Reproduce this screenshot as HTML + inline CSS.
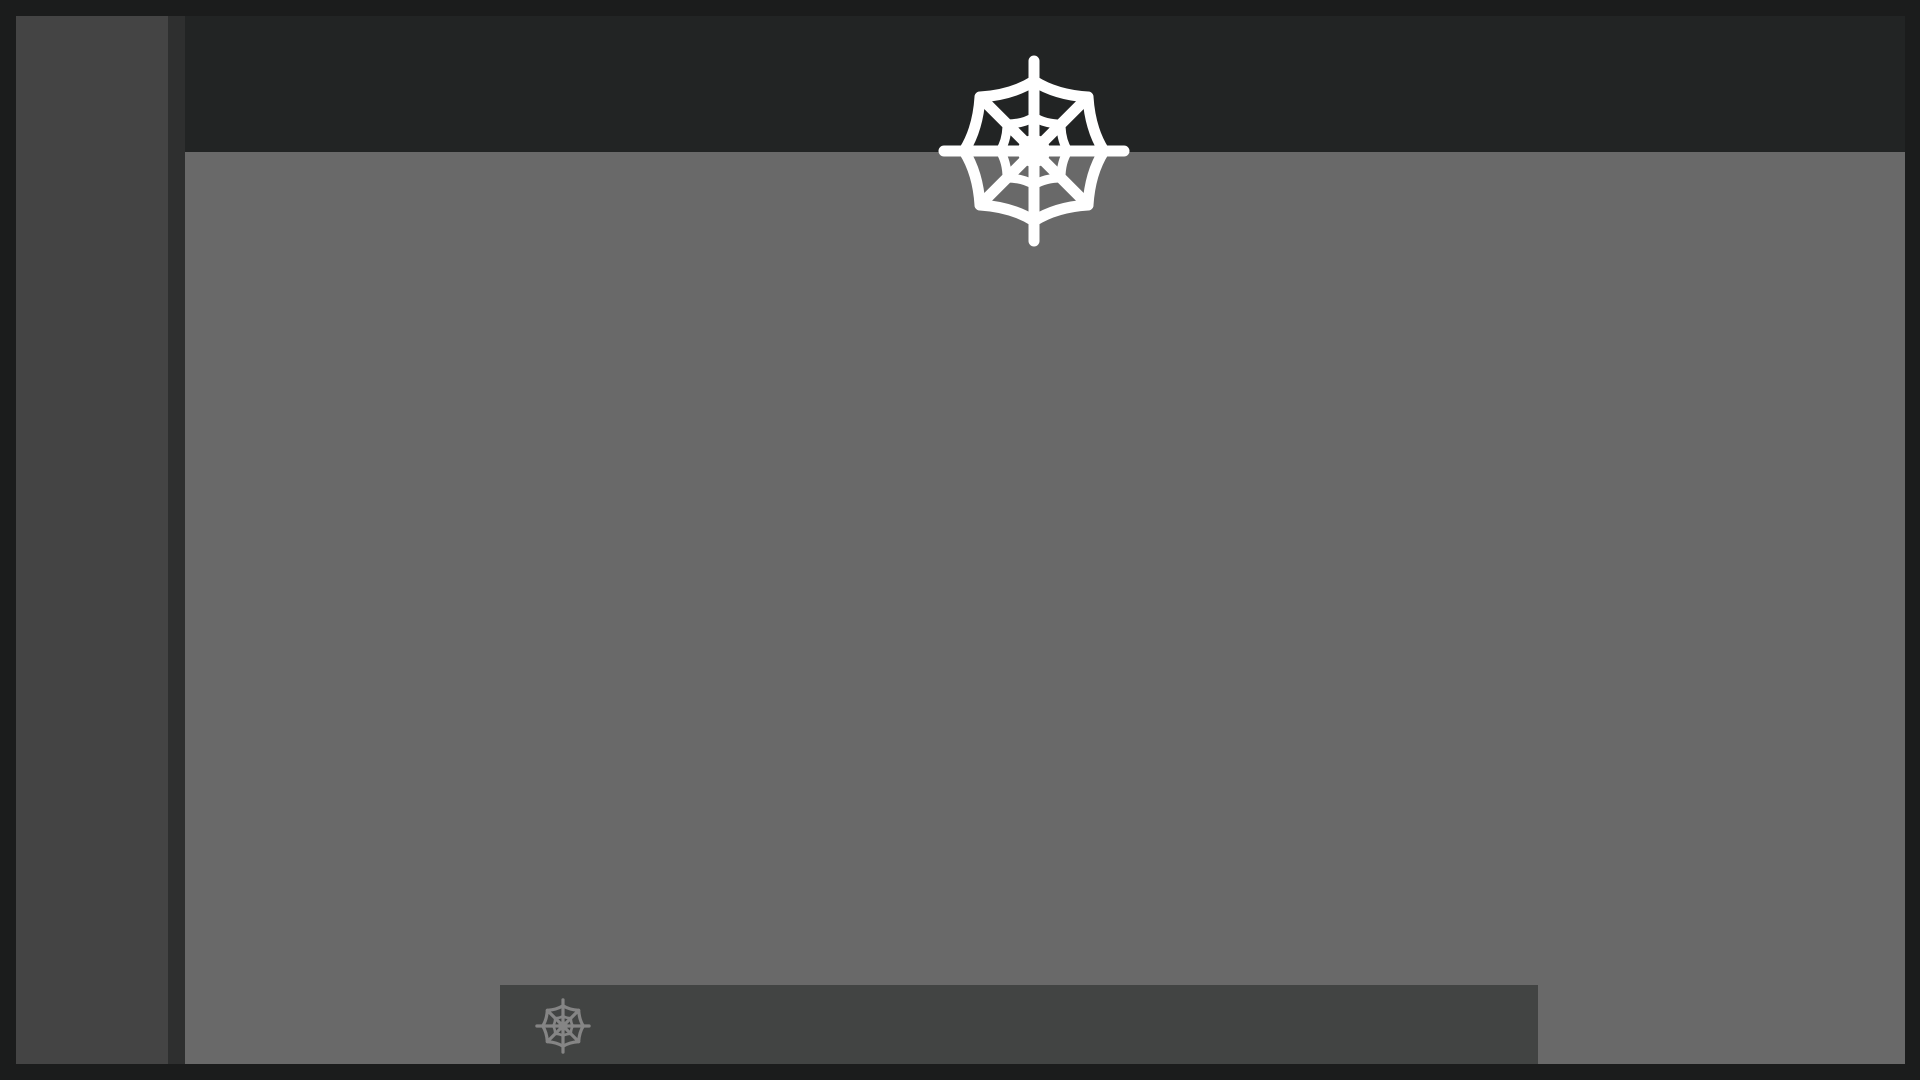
<!DOCTYPE html>
<html><head><style>
html,body{margin:0;padding:0;width:1920px;height:1080px;background:#1b1c1c;overflow:hidden;position:relative}
div{position:absolute}
</style></head><body>
<div style="left:16px;top:16px;width:152px;height:1048px;background:#444444"></div>
<div style="left:168px;top:16px;width:17px;height:1048px;background:#2e2f2f"></div>
<div style="left:185px;top:16px;width:1720px;height:1048px;background:#696969"></div>
<div style="left:185px;top:16px;width:1720px;height:136px;background:#222424"></div>
<div style="left:500px;top:985px;width:1038px;height:79px;background:#424443"></div>
<svg style="position:absolute;left:0;top:0" width="1920" height="1080">
<defs>
<g id="web" fill="none" stroke-linecap="round" stroke-linejoin="round">
<path d="M0-90V90M-90 0H90M-54-54L54 54M54-54L-54 54" stroke-width="11"/>
<path d="M0-70Q22-56 54-54Q56-22 70 0Q56 22 54 54Q22 56 0 70Q-22 56-54 54Q-56 22-70 0Q-56-22-54-54Q-22-56 0-70Z" stroke-width="11"/>
<path d="M0-34Q11-27 27-27Q27-11 34 0Q27 11 27 27Q11 27 0 34Q-11 27-27 27Q-27 11-34 0Q-27-11-27-27Q-11-27 0-34Z" stroke-width="9"/>
<path d="M0-15Q5-11 11-11Q11-5 15 0Q11 5 11 11Q5 11 0 15Q-5 11-11 11Q-11 5-15 0Q-11-5-11-11Q-5-11 0-15Z" stroke-width="6"/>
</g>
</defs>
<use href="#web" transform="translate(1034,151)" stroke="#ffffff"/>
<use href="#web" transform="translate(563,1026) scale(0.29)" stroke="#858585"/>
</svg>
</body></html>
